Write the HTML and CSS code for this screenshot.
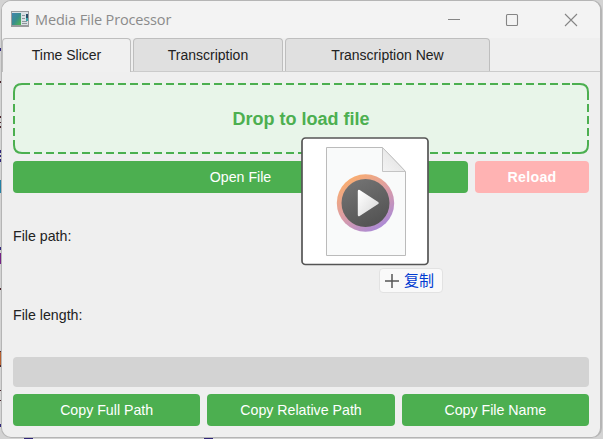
FILE: index.html
```html
<!DOCTYPE html>
<html lang="en">
<head>
<meta charset="utf-8">
<title>Media File Processor</title>
<link rel="stylesheet" href="styles.css">
</head>
<body>
<svg class="desktop" width="603" height="439" aria-hidden="true">
  <path fill="#30267a" d="M0 48h1v3H0zM0 150h1v3H0zM0 155h1v2H0zM0 159h1v3H0zM0 247h1v3H0zM0 424h1v3H0zM24 438h9v1h-9zM204 438h9v1h-9z"/>
  <path fill="#4b252c" d="M0 81h1v2H0zM0 116h1v2H0zM0 122h1v1H0zM0 126h1v2H0zM0 288h1v2H0zM0 351h1v1H0zM0 365h1v2H0zM0 390h1v1H0zM0 400h1v1H0z"/>
  <path fill="#2581a5" d="M0 180h1v13H0z"/>
  <path fill="#752285" d="M0 253h1v11H0z"/>
  <path fill="#b76030" d="M0 352h1v13H0z"/>
</svg>
<main class="window">
  <header class="titlebar">
    <svg class="app-icon" width="19" height="17">
      <defs><linearGradient id="photo" x2="1" y2="1"><stop stop-color="#4386b0"/><stop offset=".5" stop-color="#388d8e"/><stop offset="1" stop-color="#52b84b"/></linearGradient></defs>
      <path fill="#999b9d" d="M0 0h18v16H0z"/>
      <path fill="#d9e0e4" d="M1 1h16v1H1zM10 2h7v12h-7z"/>
      <path fill="url(#photo)" d="M1 2h9v12H1z"/>
      <path fill="#274f68" d="M15 3h2v4h-2z"/><path fill="#39a6aa" d="M15 7h2v3h-2z"/>
      <path stroke="#8e979c" d="M11 4.500h3M11 7.500h3M11 10.500h5M11 12.500h5"/>
    </svg>
    <h1 class="title">Media File Processor</h1>
    <svg class="controls" width="134" height="20" fill="none" stroke="#858585" stroke-width="1.100">
      <path d="M1 9.500h12"/><rect x="59.500" y="4.500" width="11" height="11" rx="1"/><path d="M118 4l12 12M130 4l-12 12"/>
    </svg>
  </header>
  <nav class="tabs">
    <div class="tab active">Time Slicer</div>
    <div class="tab second">Transcription</div>
    <div class="tab third">Transcription New</div>
  </nav>
  <section class="pane">
    <div class="drop-zone">
      <svg class="dashes" width="576" height="71" fill="none" stroke="#4caf50" stroke-width="2">
        <path d="M17 1H9Q1 1 1 9V17M559 1H567Q575 1 575 9V17M17 70H9Q1 70 1 62V57M559 70H567Q575 70 575 62V57"/>
        <path stroke-dasharray="8 4" d="M21 1H557M21 70H557M1 21V54M575 21V54"/>
      </svg>
      <span>Drop to load file</span>
    </div>
    <div class="row"><div class="button open">Open File</div><div class="button reload">Reload</div></div>
    <div class="label path">File path:</div>
    <div class="label length">File length:</div>
    <div class="progress"></div>
    <div class="row copies"><div class="button">Copy Full Path</div><div class="button">Copy Relative Path</div><div class="button">Copy File Name</div></div>
  </section>
</main>
<svg class="drag-file" width="128" height="129">
  <defs>
    <linearGradient id="ring" x1=".15" y1="0" x2=".8" y2="1"><stop stop-color="#ffb066"/><stop offset=".5" stop-color="#dc9da5"/><stop offset="1" stop-color="#a487dc"/></linearGradient>
    <linearGradient id="disc" x2=".5" y2="1"><stop stop-color="#777"/><stop offset="1" stop-color="#555"/></linearGradient>
    <linearGradient id="play" x2="1" y2="1"><stop stop-color="#fff"/><stop offset="1" stop-color="#d8d8d8"/></linearGradient>
    <linearGradient id="fold" x1="0" y1="1" x2="1" y2="0"><stop stop-color="#f4f4f4"/><stop offset="1" stop-color="#ddd"/></linearGradient>
  </defs>
  <rect x="1" y="1" width="126" height="126.500" rx="3.500" fill="#fff" stroke="#555" stroke-width="1.700"/>
  <path d="M25.500 10.500H81.500L104.500 34.500V118.500H25.500Z" fill="#f9fafa" stroke="#bbb"/>
  <path d="M81.500 10.500V34.500H104.500Z" fill="url(#fold)" stroke="#c4c4c4"/>
  <circle cx="64.500" cy="66" r="28.700" fill="url(#ring)"/>
  <circle cx="64.500" cy="66" r="24" fill="url(#disc)"/>
  <path d="M58 54L76.500 66L58 78Z" fill="url(#play)" stroke="url(#play)" stroke-width="2.400" stroke-linejoin="round"/>
</svg>
<div class="copy-tip" lang="zh-CN"><svg width="14" height="14"><path d="M0 7h14M7 0v14" stroke="#555" stroke-width="1.500"/></svg><span>复制</span></div>
</body>
</html>
```
FILE: styles.css
```css
* { box-sizing: border-box; }
body {
  margin: 0;
  width: 603px;
  height: 439px;
  overflow: hidden;
  position: relative;
  background: #d3d3d3;
  color: #222;
  font: 14.2px/18px "Liberation Sans", Arial, sans-serif;
}
.desktop { position: absolute; left: 0; top: 0; }
.window {
  position: relative;
  width: 601px;
  height: 438px;
  margin-left: 1px;
  border: 1px solid #b5b5b5;
  border-right-width: 2px;
  border-radius: 10px;
  background: #efefef;
  overflow: hidden;
}
.titlebar {
  height: 37px;
  display: flex;
  align-items: center;
  background: #f3f3f3;
  padding-left: 9px;
}
.app-icon { flex: none; margin-top: -1px; }
.title {
  margin: 0 0 0 5px;
  width: 411px;
  font: 400 14.5px/20px "Open Sans", sans-serif;
  letter-spacing: -.15px;
  color: #8b8b8b;
  white-space: nowrap;
}
.controls { flex: none; margin-left: 1px; }
.tabs {
  height: 34px;
  display: flex;
  gap: 2px;
  border-bottom: 1px solid #cbcbcb;
}
.tab {
  width: 129px;
  height: 33px;
  border: 1px solid #bebebe;
  border-bottom: 0;
  border-radius: 4px 4px 0 0;
  background: #e0e0e0;
  font-size: 14px;
  line-height: 33px;
  text-align: center;
}
.active { height: 34px; background: #f0f0f0; }
.second { width: 150px; }
.third { width: 205px; }
.pane { padding: 11px 11px 0; }
.drop-zone {
  position: relative;
  width: 576px;
  height: 71px;
  border-radius: 9px;
  background: #e8f5e9;
  color: #4caf50;
  font-size: 18px;
  font-weight: bold;
  line-height: 72px;
  text-align: center;
}
.dashes { position: absolute; left: 0; top: 0; }
.row { width: 576px; display: flex; gap: 7px; margin-top: 7px; }
.button {
  flex: 1;
  height: 32px;
  border-radius: 4px;
  background: #4caf50;
  color: #fff;
  line-height: 32px;
  text-align: center;
}
.open { flex: 0 0 455px; }
.reload { background: #ffb3b3; font-weight: bold; letter-spacing: .3px; }
.label { height: 18px; }
.path { margin-top: 34px; }
.length { margin-top: 61px; }
.progress { width: 576px; height: 30px; margin-top: 33px; border-radius: 4px; background: #d3d3d3; }
.drag-file { position: absolute; left: 301px; top: 137px; }
.copy-tip {
  position: absolute;
  left: 379px;
  top: 268px;
  width: 64px;
  height: 25px;
  padding-left: 5px;
  border: 1px solid #e2e2e2;
  border-radius: 4px;
  background: #f9f9f9;
  display: flex;
  align-items: center;
  gap: 5px;
  color: #003bd1;
  font: 15px/22px "Noto Sans CJK SC", sans-serif;
}
.copy-tip span { position: relative; top: -1px; }
```
